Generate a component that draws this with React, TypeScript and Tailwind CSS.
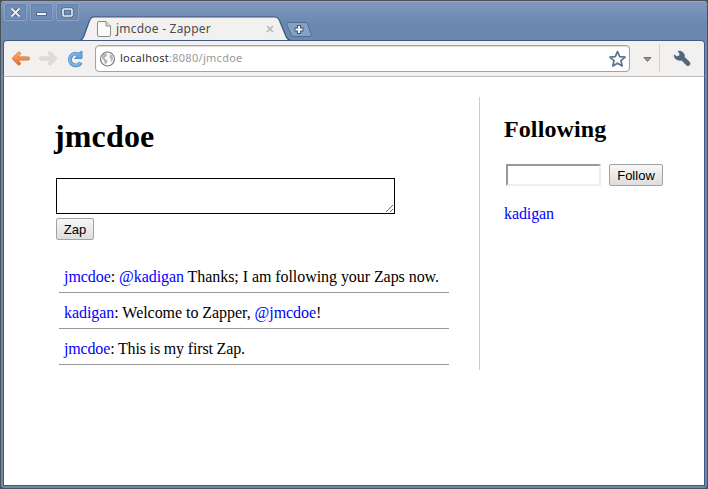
import type { ReactNode } from "react";

const serif = "font-['Liberation_Serif','Times_New_Roman',serif]";
const ui = "font-['Noto_Sans','Open_Sans',sans-serif]";

function WindowButton({ children }: { children: ReactNode }) {
  return (
    <button className="flex h-[18px] w-[23px] items-center justify-center rounded-[2px] border border-[#8ba3c6] bg-[#708bb4] shadow-[inset_0_0_0_1px_#6782ab]">
      <svg width="13" height="11" viewBox="0 0 13 11" fill="none">
        {children}
      </svg>
    </button>
  );
}

function TitleBar() {
  return (
    <header className="flex h-[40px] shrink-0 bg-linear-to-b from-[#819abf] from-0% via-[#6b88b0] via-55% to-[#6b88af] pl-[3px]">
      <div className="flex gap-[3px] pt-[2px]">
        <WindowButton>
          <path d="M3 2l7 7M10 2l-7 7" stroke="#4a6288" strokeWidth="3.6" />
          <path d="M2.500 1.500l8 8M10.500 1.500l-8 8" stroke="#eef2f7" strokeWidth="1.8" />
        </WindowButton>
        <WindowButton>
          <path d="M1 7h11" stroke="#4a6288" strokeWidth="3.5" />
          <path d="M2 7h9" stroke="#eef2f7" strokeWidth="2" />
        </WindowButton>
        <WindowButton>
          <rect x="2" y="2" width="9" height="7" rx="1" stroke="#4a6288" strokeWidth="3.2" />
          <rect x="2" y="2" width="9" height="7" rx="1" stroke="#eef2f7" strokeWidth="1.6" />
        </WindowButton>
      </div>
      <div className="mt-[15px] ml-[1px] grid h-[25px] w-[211px] *:[grid-area:1/1]">
        <svg width="211" height="25" viewBox="0 0 211 25">
          <path d="M0 25V24.500C3 24 4 20 5 17L9 6C10.500 2 11.500 .8 14.500 .8H194C198 .8 199 3 200.500 7L205 18C206 21 207 24 211 24.500V25Z" fill="#f2f1f0" />
          <path d="M0 24.500C3 24 4 20 5 17L9 6C10.500 2 11.500 .8 14.500 .8H194C198 .8 199 3 200.500 7L205 18C206 21 207 24 211 24.500" fill="none" stroke="#415c82" strokeWidth="1.300" />
        </svg>
        <div className="flex items-start pt-[5px] pl-[17px]">
          <svg width="14" height="16" viewBox="0 0 14 16" fill="none">
            <path d="M.5 2Q.5 .5 2 .5H9L13.500 5V14Q13.500 15.500 12 15.500H2Q.5 15.500 .5 14Z" fill="#fbfbfa" stroke="#8b8b88" />
            <path d="M9 .5V5H13.500" fill="#deddda" stroke="#8b8b88" />
          </svg>
          <span className={`${ui} ml-[5px] w-[150px] text-[12px] leading-[16px] tracking-[0.22px] text-[#4c4c4c]`}>jmcdoe - Zapper</span>
          <svg className="mt-[4px]" width="8" height="8" viewBox="0 0 8 8">
            <path d="M1 1l6 6M7 1l-6 6" stroke="#b5b5b3" strokeWidth="1.500" />
          </svg>
        </div>
      </div>
      <svg className="mt-[19px] -ml-[6px]" width="28" height="18" viewBox="0 0 28 18">
        <path d="M3 2.500H20Q22 2.500 23 5L26 13.500Q27 16.500 25 16.500H9Q7 16.500 6 14L2 5Q1 2.500 3 2.500Z" fill="#87a0c2" stroke="#4e6c96" />
        <path d="M14 5v9M9.500 9.500h9" stroke="#3f5a81" strokeWidth="4.200" />
        <path d="M14 6v7M10.500 9.500h7" stroke="#f4f6f9" strokeWidth="2" />
      </svg>
    </header>
  );
}

function Toolbar() {
  return (
    <div className="-mx-px flex h-[37px] shrink-0 items-start rounded-t-[4px] border-x border-t border-b border-x-[#3f5a81] border-t-[#3f5a81] border-b-[#bcbbb8] bg-[#f2f1f0]">
      <svg className="mt-[9px] ml-[7px]" width="20" height="17" viewBox="0 0 20 17" fill="none" strokeLinecap="round" strokeLinejoin="round">
        <defs>
          <linearGradient id="back" gradientUnits="userSpaceOnUse" x1="0" y1="1" x2="0" y2="16">
            <stop offset="0" stopColor="#f9b27e" />
            <stop offset=".5" stopColor="#f2914d" />
            <stop offset="1" stopColor="#dc6420" />
          </linearGradient>
        </defs>
        <path d="M8 3.500L3 8.500L8 13.500M4 8.500H17" stroke="#d3702f" strokeWidth="3.800" />
        <path d="M8 3.500L3 8.500L8 13.500M4 8.500H17" stroke="url(#back)" strokeWidth="2.600" />
      </svg>
      <svg className="mt-[9px] ml-[7px]" width="20" height="17" viewBox="0 0 20 17" fill="none" strokeLinecap="round" strokeLinejoin="round">
        <path d="M12 3.500L17 8.500L12 13.500M16 8.500H3" stroke="#d0cfcc" strokeWidth="3.800" />
        <path d="M12 3.500L17 8.500L12 13.500M16 8.500H3" stroke="#dfdedb" strokeWidth="2.600" />
      </svg>
      <svg className="mt-[9px] ml-[9px]" width="18" height="18" viewBox="0 0 18 18" fill="none">
        <path d="M11 4.200A5.800 5.800 0 1 0 13.800 12.400" stroke="#5590cb" strokeWidth="4" />
        <path d="M15 1V8.500H7.500L10.300 5.800L11 3.500Z" fill="#6ba5dc" stroke="#5590cb" strokeLinejoin="round" />
        <path d="M12 4.700A5.800 5.800 0 1 0 13.500 12.200" stroke="#7db2e3" strokeWidth="2.200" />
      </svg>
      <div className={`${ui} ml-[10px] mt-1 flex h-[27px] w-[535px] items-center rounded-[4px] border border-[#a2a29f] bg-white pl-[3px] shadow-[inset_0_1px_1px_#deddd9] text-[11px] text-[#9a9a9a]`}>
        <svg width="17" height="16" viewBox="0 0 17 16">
          <circle cx="8.500" cy="8" r="7" fill="#fafafa" stroke="#7c7c7c" strokeWidth="1.200" />
          <path d="M3 5L5 2.800L8 2.300L7.500 4L8.300 4.800L6 6.300L5.500 7.500L8 9L8.500 10.500L7.500 12L7 13.500L5.500 12L5 9.500L3 7.500Z" fill="#b4b4b4" />
          <path d="M11 3.500L12.800 4L14 6.500L13.700 9L12.500 11L11.500 9.500L12 8L10.500 6.800Z" fill="#b4b4b4" />
        </svg>
        <span className="ml-[4px] grow tracking-[0.28px] whitespace-nowrap"><span className="text-[#303030]">localhost</span>:8080/jmcdoe</span>
        <svg className="mr-[3px]" width="18" height="18" viewBox="0 0 18 18">
          <path d="M9.500 1.500L11.700 6.600L17.100 7.100L13 10.700L14.200 16L9.500 13.200L4.800 16L6 10.700L1.900 7.100L7.300 6.600Z" fill="#fff" stroke="#60718f" strokeWidth="1.700" strokeLinejoin="round" />
        </svg>
      </div>
      <svg className="mt-[15px] ml-[13px]" width="9" height="7" viewBox="0 0 9 7">
        <path d="M1 1.500h7L4.500 5.500Z" fill="#999993" stroke="#70706b" />
      </svg>
      <div className="mt-[3px] ml-[7px] h-[28px] w-px bg-[#d4d3d0]" />
      <svg className="mt-[9px] ml-[13px]" width="18" height="17" viewBox="0 0 18 17">
        <path d="M5 1.200Q8 .4 10 2.500Q12 4.500 11.400 7L16.600 12Q17.600 13.500 16.600 15Q15 16.600 13.500 15.200L8.700 10.300Q4 11 2 8.300Q.8 6.500 1.300 4.800L3.700 6.600L6.400 5.800L6.700 3.500Z" fill="#52657f" stroke="#455a78" strokeWidth=".5" />
      </svg>
    </div>
  );
}

function PageButton({ className, children }: { className: string; children: ReactNode }) {
  return (
    <button className={`${className} h-[22px] rounded-[2px] border border-[#a3a3a3] bg-linear-to-b from-[#f7f7f7] to-[#dddddd] pt-px font-['Liberation_Sans',Arial,sans-serif] text-[13px] leading-[19px] text-black`}>
      {children}
    </button>
  );
}

function User({ children }: { children: ReactNode }) {
  return <a className="text-[#0000ff]">{children}</a>;
}

export default function App() {
  return (
    <div className="flex h-[489px] w-[708px] flex-col overflow-hidden bg-[#4b4b4b]">
      <div className="flex h-full flex-col rounded-[4px] border border-[#4f5256] bg-[#6b88af] px-[3px] pb-[2px]">
        <div className="-mx-[3px] flex shrink-0 flex-col overflow-hidden rounded-t-[3px] border-t border-[#91a7c7]">
          <div className="-mt-px"><TitleBar /></div>
        </div>
        <div className="-mt-px"><Toolbar /></div>
        <main className={`${serif} -mx-px flex grow border-x border-b border-[#3f5a81] bg-white text-[16px] leading-[18px] text-black`}>
          <section className="w-[475px] pl-[50px]">
            <h1 className="mt-[41px] text-[32px] leading-[37px] font-bold tracking-[0.15px]">jmcdoe</h1>
            <textarea aria-label="Zap" className="mt-[23px] ml-[2px] block h-[36px] w-[339px] resize border border-black bg-white" />
            <PageButton className="mt-1 ml-[2px] w-[38px]">Zap</PageButton>
            <ul className="mt-[17px] ml-[5px] w-[390px]">
              <li className="h-[36px] border-b border-[#999] pt-[11px] pl-[5px] tracking-[-0.06px] whitespace-nowrap"><User>jmcdoe</User>: <User>@kadigan</User> Thanks; I am following your Zaps now.</li>
              <li className="h-[36px] border-b border-[#999] pt-[11px] pl-[5px] tracking-[-0.05px] whitespace-nowrap"><User>kadigan</User>: Welcome to Zapper, <User>@jmcdoe</User>!</li>
              <li className="h-[36px] border-b border-[#999] pt-[11px] pl-[5px] tracking-[-0.16px] whitespace-nowrap"><User>jmcdoe</User>: This is my first Zap.</li>
            </ul>
          </section>
          <aside className="mt-5 h-[273px] grow border-l border-[#ccc] pl-6">
            <h2 className="mt-[19px] text-[24px] leading-[27px] font-bold tracking-[0.1px]">Following</h2>
            <div className="mt-[21px] ml-[2px] flex gap-2">
              <input aria-label="User to follow" className="h-[22px] w-[95px] border-2 border-t-[#999] border-r-[#eee] border-b-[#eee] border-l-[#999] bg-white" />
              <PageButton className="w-[54px]">Follow</PageButton>
            </div>
            <p className="mt-[19px] tracking-[-0.1px]"><User>kadigan</User></p>
          </aside>
        </main>
      </div>
    </div>
  );
}
